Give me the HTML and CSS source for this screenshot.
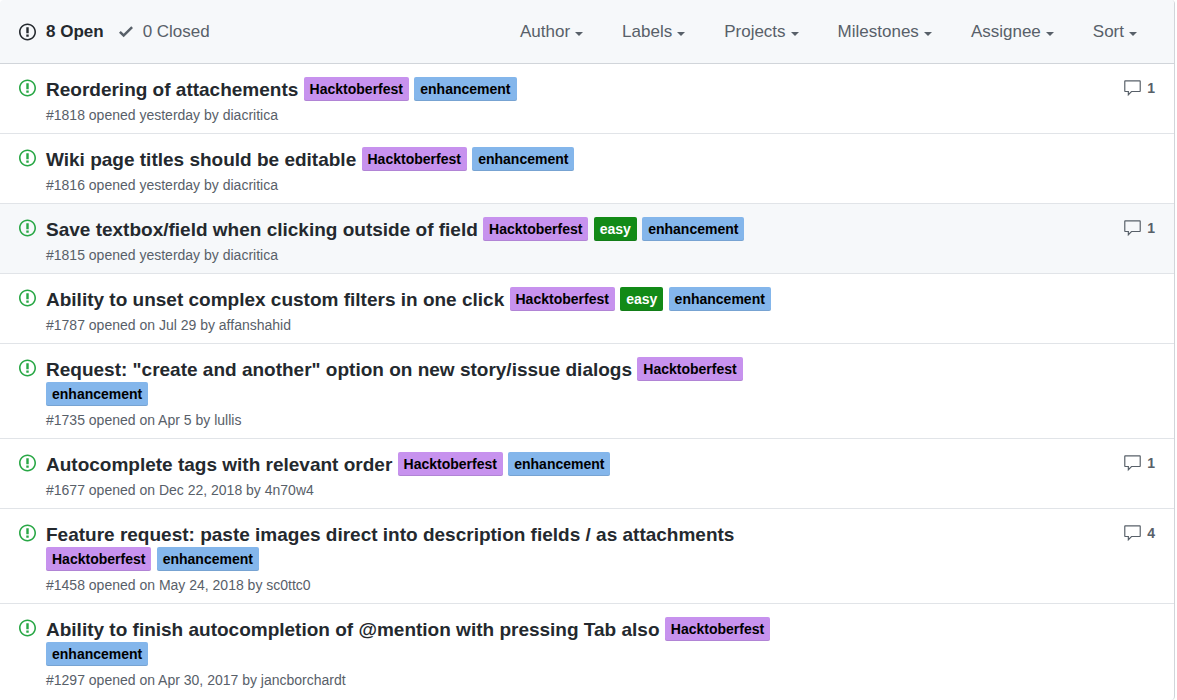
FILE: index.html
```html
<!DOCTYPE html>
<html lang="en">
<head>
<meta charset="utf-8">
<meta name="viewport" content="width=device-width, initial-scale=1">
<title>Issues</title>
<link rel="stylesheet" href="styles.css">
</head>
<body>
<svg class="sprite" aria-hidden="true">
  <symbol id="issue" viewBox="0 0 14 16"><path fill-rule="evenodd" d="M7 2.3c3.14 0 5.7 2.56 5.7 5.7s-2.56 5.7-5.7 5.7A5.71 5.71 0 0 1 1.3 8c0-3.14 2.56-5.7 5.7-5.7zM7 1C3.14 1 0 4.14 0 8s3.14 7 7 7 7-3.14 7-7-3.14-7-7-7zm1 3H6v5h2V4zm0 6H6v2h2v-2z"/></symbol>
  <symbol id="check" viewBox="0 0 12 16"><path fill-rule="evenodd" d="M12 5l-8 8-4-4 1.5-1.5L4 10l6.5-6.5L12 5z"/></symbol>
  <symbol id="comment" viewBox="0 0 16 16"><path fill-rule="evenodd" d="M14 1H2c-.55 0-1 .45-1 1v8c0 .55.45 1 1 1h2v3.5L7.5 11H14c.55 0 1-.45 1-1V2c0-.55-.45-1-1-1zm0 9H7l-2 2v-2H2V2h12v8z"/></symbol>
</svg>
<main class="box">
  <header class="box-header">
    <nav class="states" aria-label="Issue state">
      <a class="state selected" href="#"><svg class="icon-issue"><use href="#issue"/></svg>8 Open</a>
      <a class="state" href="#"><svg class="icon-check"><use href="#check"/></svg>0 Closed</a>
    </nav>
    <div class="filters">
      <button class="filter" type="button">Author</button>
      <button class="filter" type="button">Labels</button>
      <button class="filter" type="button">Projects</button>
      <button class="filter" type="button">Milestones</button>
      <button class="filter" type="button">Assignee</button>
      <button class="filter" type="button">Sort</button>
    </div>
  </header>
  <ul class="issues">
    <li class="issue">
      <svg class="icon-issue"><use href="#issue"/></svg>
      <div class="body">
        <div class="heading"><a class="title" href="#">Reordering of attachements</a> <a class="label hacktoberfest" href="#">Hacktoberfest</a> <a class="label enhancement" href="#">enhancement</a></div>
        <div class="meta">#1818 opened yesterday by <a href="#">diacritica</a></div>
      </div>
      <a class="comments" href="#"><svg class="icon-comment"><use href="#comment"/></svg>1</a>
    </li>
    <li class="issue">
      <svg class="icon-issue"><use href="#issue"/></svg>
      <div class="body">
        <div class="heading"><a class="title" href="#">Wiki page titles should be editable</a> <a class="label hacktoberfest" href="#">Hacktoberfest</a> <a class="label enhancement" href="#">enhancement</a></div>
        <div class="meta">#1816 opened yesterday by <a href="#">diacritica</a></div>
      </div>
    </li>
    <li class="issue focused">
      <svg class="icon-issue"><use href="#issue"/></svg>
      <div class="body">
        <div class="heading"><a class="title" href="#">Save textbox/field when clicking outside of field</a> <a class="label hacktoberfest" href="#">Hacktoberfest</a> <a class="label easy" href="#">easy</a> <a class="label enhancement" href="#">enhancement</a></div>
        <div class="meta">#1815 opened yesterday by <a href="#">diacritica</a></div>
      </div>
      <a class="comments" href="#"><svg class="icon-comment"><use href="#comment"/></svg>1</a>
    </li>
    <li class="issue">
      <svg class="icon-issue"><use href="#issue"/></svg>
      <div class="body">
        <div class="heading"><a class="title" href="#">Ability to unset complex custom filters in one click</a> <a class="label hacktoberfest" href="#">Hacktoberfest</a> <a class="label easy" href="#">easy</a> <a class="label enhancement" href="#">enhancement</a></div>
        <div class="meta">#1787 opened on Jul 29 by <a href="#">affanshahid</a></div>
      </div>
    </li>
    <li class="issue">
      <svg class="icon-issue"><use href="#issue"/></svg>
      <div class="body">
        <div class="heading"><a class="title" href="#">Request: "create and another" option on new story/issue dialogs</a> <a class="label hacktoberfest" href="#">Hacktoberfest</a> <a class="label enhancement" href="#">enhancement</a></div>
        <div class="meta">#1735 opened on Apr 5 by <a href="#">lullis</a></div>
      </div>
    </li>
    <li class="issue">
      <svg class="icon-issue"><use href="#issue"/></svg>
      <div class="body">
        <div class="heading"><a class="title" href="#">Autocomplete tags with relevant order</a> <a class="label hacktoberfest" href="#">Hacktoberfest</a> <a class="label enhancement" href="#">enhancement</a></div>
        <div class="meta">#1677 opened on Dec 22, 2018 by <a href="#">4n70w4</a></div>
      </div>
      <a class="comments" href="#"><svg class="icon-comment"><use href="#comment"/></svg>1</a>
    </li>
    <li class="issue">
      <svg class="icon-issue"><use href="#issue"/></svg>
      <div class="body">
        <div class="heading"><a class="title" href="#">Feature request: paste images direct into description fields / as attachments</a> <a class="label hacktoberfest" href="#">Hacktoberfest</a> <a class="label enhancement" href="#">enhancement</a></div>
        <div class="meta">#1458 opened on May 24, 2018 by <a href="#">sc0ttc0</a></div>
      </div>
      <a class="comments" href="#"><svg class="icon-comment"><use href="#comment"/></svg>4</a>
    </li>
    <li class="issue">
      <svg class="icon-issue"><use href="#issue"/></svg>
      <div class="body">
        <div class="heading"><a class="title" href="#">Ability to finish autocompletion of @mention with pressing Tab also</a> <a class="label hacktoberfest" href="#">Hacktoberfest</a> <a class="label enhancement" href="#">enhancement</a></div>
        <div class="meta">#1297 opened on Apr 30, 2017 by <a href="#">jancborchardt</a></div>
      </div>
    </li>
  </ul>
</main>
</body>
</html>
```
FILE: styles.css
```css
* { box-sizing: border-box; }

body {
  margin: 0;
  background: #fff;
  color: #586069;
  font: 14px/20px "Liberation Sans", Arial, sans-serif;
}

a { color: inherit; text-decoration: none; }

svg { flex: none; fill: currentColor; }
.sprite { display: none; }
.icon-issue { width: 17px; height: 20px; }
.icon-check { width: 14px; height: 19px; }
.icon-comment { width: 19px; height: 19px; }

.box {
  min-height: 100vh;
  margin-right: 2px;
  border-right: 1px solid #d1d5da;
  border-radius: 4px;
  overflow: hidden;
}

.box-header {
  display: flex;
  align-items: center;
  justify-content: space-between;
  height: 64px;
  padding: 0 37px 0 19px;
  background: #f6f8fa;
  border-bottom: 1px solid #d1d5da;
  font-size: 17px;
}

.states { display: flex; gap: 15px; }
.state { display: flex; align-items: center; gap: 10px; }
.selected { color: #24292e; font-weight: bold; }

.filters { display: flex; gap: 39px; }

.filter {
  display: flex;
  align-items: center;
  gap: 5px;
  padding: 0;
  border: 0;
  background: none;
  color: inherit;
  font: inherit;
  cursor: pointer;
}

.filter::after {
  content: "";
  margin-top: 4px;
  border: 4px solid transparent;
  border-top-color: currentColor;
  border-bottom: 0;
}

.issues { margin: 0; padding: 0; list-style: none; }

.issue {
  display: flex;
  align-items: flex-start;
  gap: 10px;
  padding: 13px 19px 8px;
  border-bottom: 1px solid #e1e4e8;
}

.issue:last-child { border-bottom: 0; }
.issue > .icon-issue { margin-top: 1px; color: #28a745; }
.focused { background: #f6f8fa; }

.body { width: 67%; }
.heading { font-size: 19px; line-height: 25px; }
.title { color: #24292e; font-weight: bold; }

.label {
  display: inline-block;
  height: 24px;
  padding: 0 6px;
  border-radius: 2px;
  box-shadow: inset 0 -1px 0 rgba(27, 31, 35, 0.12);
  font-size: 14px;
  font-weight: bold;
  line-height: 24px;
  vertical-align: top;
}

.hacktoberfest { background: #c792ee; color: #000; }
.enhancement { background: #84b6eb; color: #000; }
.easy { background: #128a17; color: #fff; }

.meta { margin-top: 3px; }

.comments {
  display: flex;
  align-items: center;
  gap: 5px;
  margin: 1px 0 0 auto;
  font-weight: bold;
}
```
